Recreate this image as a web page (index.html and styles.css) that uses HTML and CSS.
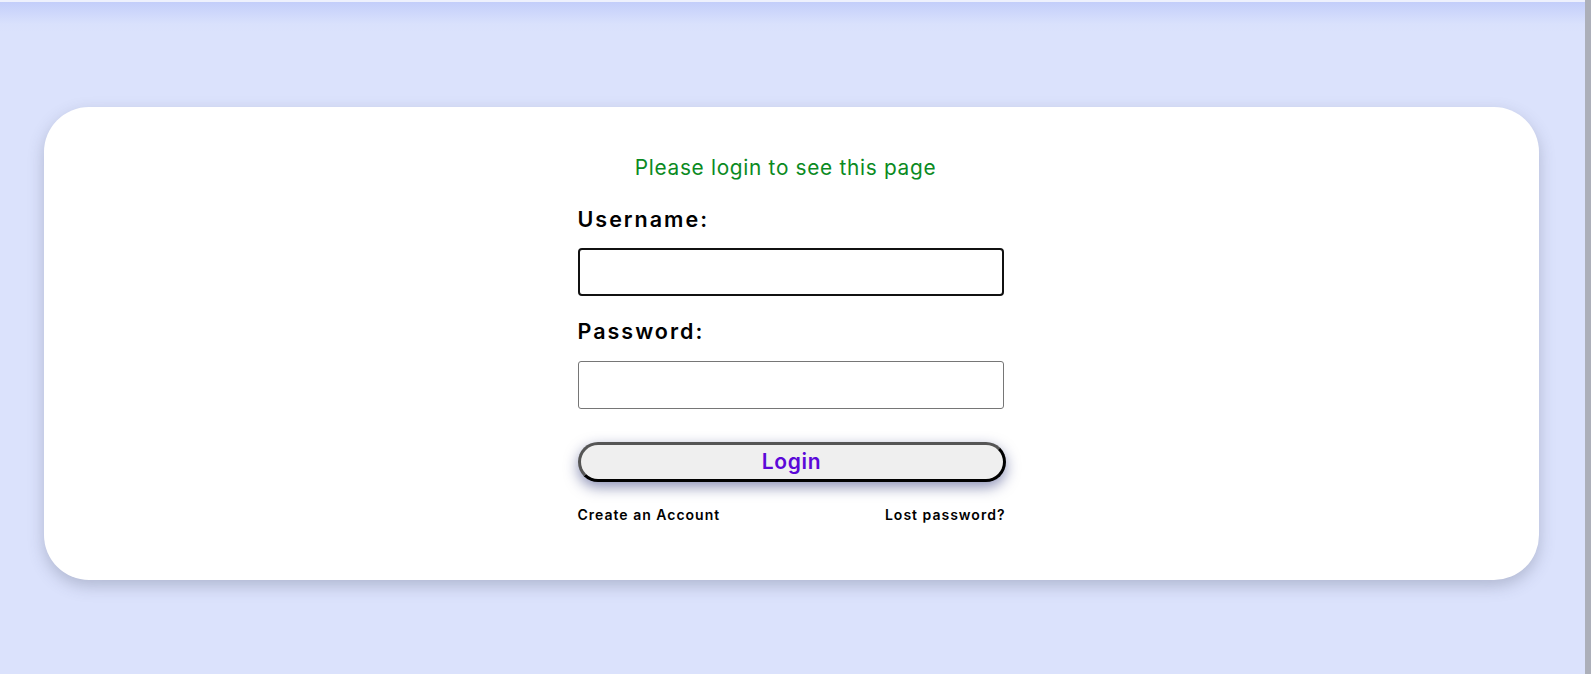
FILE: index.html
```html
<!DOCTYPE html>
<html lang="en">
<head>
<meta charset="utf-8">
<title>Login</title>
<link rel="stylesheet" href="styles.css">
</head>
<body>
<div class="page">
  <main class="stage">
    <section class="card">
      <form class="login-form">
        <p class="message">Please login to see this page</p>
        <label class="field-label" for="username">Username:</label>
        <input class="field field-focus" id="username" type="text">
        <label class="field-label field-label-2" for="password">Password:</label>
        <input class="field" id="password" type="password">
        <button class="login-btn" type="button">Login</button>
        <div class="links">
          <a href="#" class="link">Create an Account</a>
          <a href="#" class="link">Lost password?</a>
        </div>
      </form>
    </section>
  </main>
  <div class="scrollbar"></div>
</div>
</body>
</html>
```
FILE: styles.css
```css
html, body {
  margin: 0;
  padding: 0;
  height: 100%;
}
body {
  font-family: "Inter", "Open Sans", sans-serif;
  background: #dbe2fc;
  overflow: hidden;
}
.page {
  display: flex;
  height: 674px;
}
.stage {
  flex: 1;
  border-top: 2px solid #eef1fd;
  background: linear-gradient(#c3cefa 0, #d9e1fc 22px, #dbe2fc 30px);
  padding-top: 105px;
}
.scrollbar {
  width: 6px;
  background: #acafb9;
}
.card {
  margin: 0 46px 0 44px;
  height: 473px;
  box-sizing: border-box;
  background: #ffffff;
  border-radius: 45px;
  box-shadow: 0 6px 16px rgba(70, 75, 100, 0.28);
  padding-top: 46px;
  display: flex;
  justify-content: center;
}
.login-form {
  width: 428px;
  display: flex;
  flex-direction: column;
}
.message {
  margin: 0 12px 0 0;
  text-align: center;
  color: #0a8a22;
  font-size: 20.8px;
  line-height: 30px;
  font-weight: 400;
  letter-spacing: 0.7px;
}
.field-label {
  margin-top: 21px;
  font-size: 21.5px;
  line-height: 30px;
  font-weight: 600;
  letter-spacing: 2px;
  color: #000;
}
.field-label-2 {
  margin-top: 20px;
}
.field {
  margin-top: 15px;
  height: 48px;
  box-sizing: border-box;
  width: 426px;
  border: 1px solid #767676;
  border-radius: 3px;
  background: #fff;
  font: inherit;
}
.field-focus {
  border: 2px solid #111;
  border-radius: 4px;
  margin-top: 14px;
}
.login-btn {
  margin-top: 33px;
  height: 40px;
  width: 428px;
  box-sizing: border-box;
  border-radius: 20px;
  border-width: 3px;
  border-style: solid;
  border-color: #555 #000 #000 #555;
  background: #efefef;
  color: #5b08d8;
  font-family: inherit;
  font-size: 21px;
  font-weight: 600;
  line-height: 30px;
  letter-spacing: 0.7px;
  padding: 0;
  box-shadow: 0 5px 14px rgba(25, 35, 110, 0.5);
}
.links {
  margin-top: 23px;
  display: flex;
  justify-content: space-between;
}
.link {
  font-size: 14px;
  line-height: 20px;
  font-weight: 600;
  letter-spacing: 1px;
  color: #000;
  text-decoration: none;
}
```
